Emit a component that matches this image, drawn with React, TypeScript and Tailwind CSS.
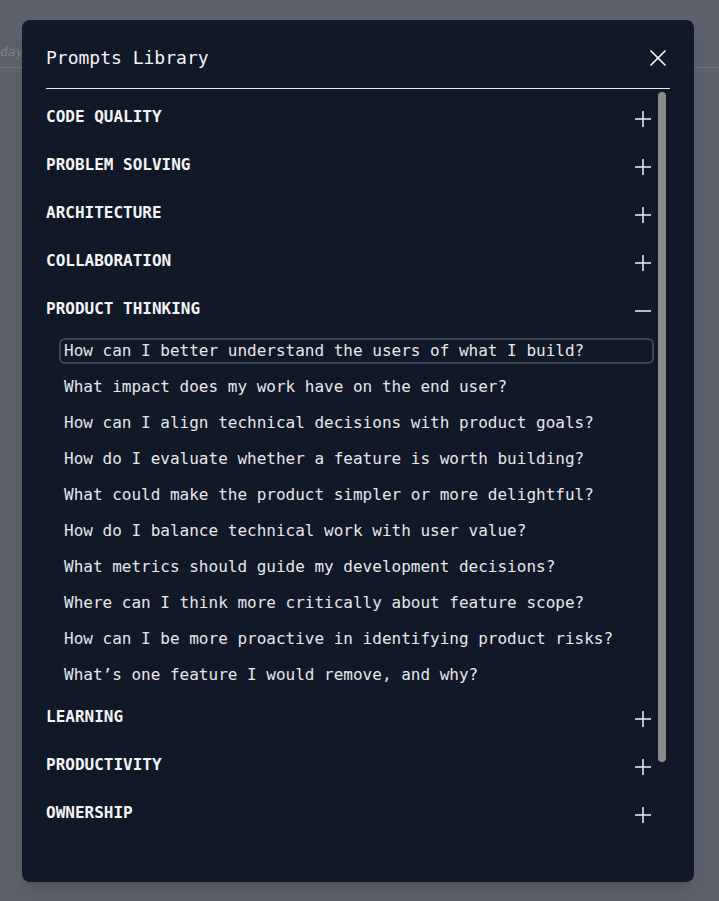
const categories = [
  "CODE QUALITY",
  "PROBLEM SOLVING",
  "ARCHITECTURE",
  "COLLABORATION",
  "PRODUCT THINKING",
  "LEARNING",
  "PRODUCTIVITY",
  "OWNERSHIP",
];

const openIndex = 4;

const prompts = [
  "How can I better understand the users of what I build?",
  "What impact does my work have on the end user?",
  "How can I align technical decisions with product goals?",
  "How do I evaluate whether a feature is worth building?",
  "What could make the product simpler or more delightful?",
  "How do I balance technical work with user value?",
  "What metrics should guide my development decisions?",
  "Where can I think more critically about feature scope?",
  "How can I be more proactive in identifying product risks?",
  "What\u2019s one feature I would remove, and why?",
];

function PlusIcon({ open }: { open: boolean }) {
  return (
    <svg width="18" height="18" viewBox="0 0 18 18" fill="none" stroke="currentColor" strokeWidth="1.6" strokeLinecap="butt">
      <line x1="1" y1="9" x2="17" y2="9" />
      {!open && <line x1="9" y1="1" x2="9" y2="17" />}
    </svg>
  );
}

function CloseIcon() {
  return (
    <svg width="16" height="16" viewBox="0 0 16 16" fill="none" stroke="currentColor" strokeWidth="1.7" strokeLinecap="round">
      <line x1="1" y1="1" x2="15" y2="15" />
      <line x1="15" y1="1" x2="1" y2="15" />
    </svg>
  );
}

export default function App() {
  return (
    <div className="relative h-[901px] w-full overflow-hidden bg-[#5c616b] font-['DejaVu_Sans_Mono',monospace]">
      {/* page behind the dialog */}
      <div className="h-[68px] border-b border-[#6c717b] pt-[39px]">
        <span className="text-[13px] italic text-[#7b808a]">day</span>
      </div>

      <div className="absolute left-[22px] top-[20px] flex h-[862px] w-[672px] flex-col rounded-lg bg-[#111827] px-6 pt-6 shadow-lg">
        <div className="flex items-center justify-between border-b border-[#e5e7eb] pb-4">
          <h2 className="text-[18px] leading-7 font-medium text-[#f3f4f6]">Prompts Library</h2>
          <button className="mr-[4px] text-[#f3f4f6]">
            <CloseIcon />
          </button>
        </div>

        <div className="flex min-h-0 flex-1">
          <div className="flex-1 overflow-hidden pt-[4px]">
            {categories.map((c, i) => (
              <div key={c}>
                <div className="flex h-12 items-center justify-between text-[#f3f4f6]">
                  <span className="text-[16px] font-semibold">{c}</span>
                  <span className="mr-[2px] mt-[3px] text-[#e5e7eb]">
                    <PlusIcon open={i === openIndex} />
                  </span>
                </div>
                {i === openIndex && (
                  <div>
                    {prompts.map((p, j) => (
                      <div key={p} className="flex h-9 items-center pl-[13px]">
                        <div
                          className={
                            j === 0
                              ? "flex h-[26px] w-full items-center rounded-md border-2 border-[#3f4858] px-[3px] text-[16px] text-[#e5e7eb]"
                              : "flex h-[26px] w-full items-center rounded-md border-2 border-transparent px-[3px] text-[16px] text-[#e5e7eb]"
                          }
                        >
                          {p}
                        </div>
                      </div>
                    ))}
                  </div>
                )}
              </div>
            ))}
          </div>
          <div className="flex w-4 justify-center pt-[3px]">
            <div className="h-[670px] w-2 rounded-full bg-[#8a8a8a]" />
          </div>
        </div>
      </div>
    </div>
  );
}
